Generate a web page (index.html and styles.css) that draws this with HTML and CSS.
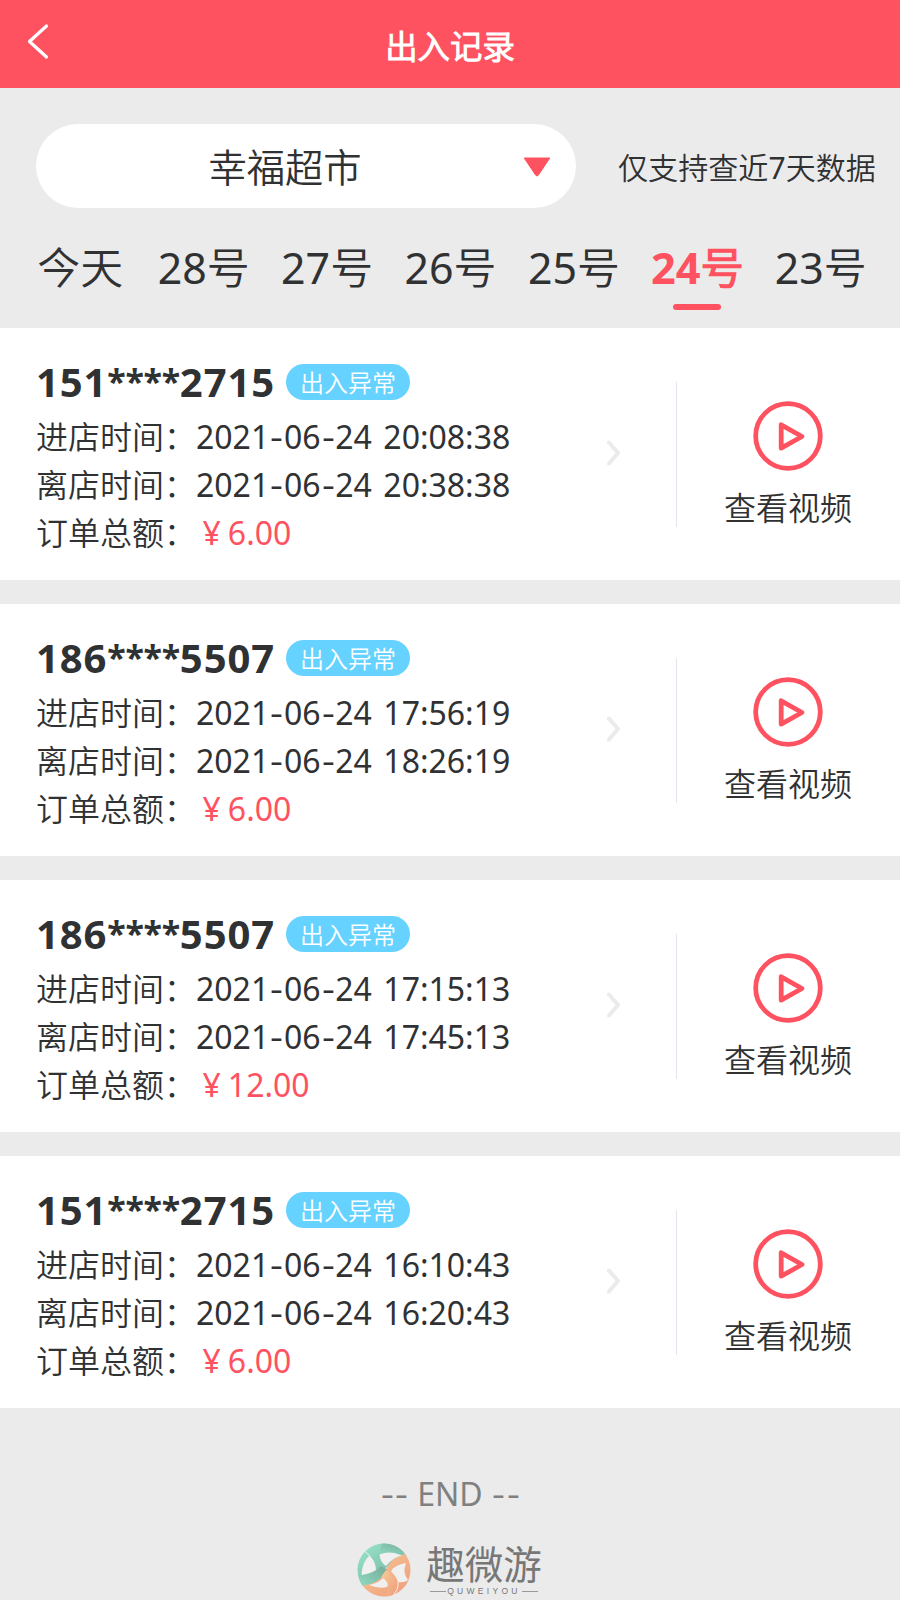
FILE: index.html
```html
<!DOCTYPE html>
<html lang="zh-CN">
<head>
<meta charset="utf-8">
<title>出入记录</title>
<link rel="stylesheet" href="styles.css">
</head>
<body>
<svg class="defs" width="0" height="0">
  <symbol id="chevron" viewBox="0 0 14 26"><path d="M2 2.5 11 13 2 23.5" fill="none" stroke="#ebebeb" stroke-width="4" stroke-linecap="round" stroke-linejoin="round"/></symbol>
  <symbol id="play" viewBox="0 0 70 70"><circle cx="35" cy="35" r="32.3" fill="none" stroke="#ff5260" stroke-width="4.8"/><path d="M28.2 23.8V47.2L49 35.5Z" fill="none" stroke="#ff5260" stroke-width="4.8" stroke-linejoin="round"/></symbol>
</svg>
<header class="topbar">
  <svg class="back" width="24" height="38" viewBox="0 0 24 38"><path d="M20.5 3 3.5 18.5 20.5 34" fill="none" stroke="#fff" stroke-width="3.2" stroke-linecap="round" stroke-linejoin="round"/></svg>
  <h1 class="title">出入记录</h1>
</header>
<section class="filter">
  <div class="select"><span class="shop">幸福超市</span><svg class="arrow" width="28" height="20" viewBox="0 0 28 20"><path d="M1.2 1H26.8L15.3 18.2Q14 19.8 12.7 18.2Z" fill="#ff5260" stroke="#ff5260" stroke-linejoin="round"/></svg></div>
  <span class="note">仅支持查近7天数据</span>
</section>
<nav class="tabs">
  <a class="tab">今天</a><a class="tab">28号</a><a class="tab">27号</a><a class="tab">26号</a><a class="tab">25号</a><a class="tab active">24号</a><a class="tab">23号</a>
</nav>
<main class="list">
  <article class="card">
    <div class="info">
      <div class="head"><b class="phone">151<span class="mask">****</span>2715</b><span class="badge">出入异常</span></div>
      <p class="row">进店时间：2021<i class="dash">-</i>06<i class="dash">-</i>24 20:08:38</p>
      <p class="row">离店时间：2021<i class="dash">-</i>06<i class="dash">-</i>24 20:38:38</p>
      <p class="row">订单总额：<span class="money"><i class="yen">¥</i>6.00</span></p>
    </div>
    <svg class="chevron" width="14" height="26"><use href="#chevron"/></svg>
    <div class="video"><svg width="70" height="70"><use href="#play"/></svg><span class="label">查看视频</span></div>
  </article>
  <article class="card">
    <div class="info">
      <div class="head"><b class="phone">186<span class="mask">****</span>5507</b><span class="badge">出入异常</span></div>
      <p class="row">进店时间：2021<i class="dash">-</i>06<i class="dash">-</i>24 17:56:19</p>
      <p class="row">离店时间：2021<i class="dash">-</i>06<i class="dash">-</i>24 18:26:19</p>
      <p class="row">订单总额：<span class="money"><i class="yen">¥</i>6.00</span></p>
    </div>
    <svg class="chevron" width="14" height="26"><use href="#chevron"/></svg>
    <div class="video"><svg width="70" height="70"><use href="#play"/></svg><span class="label">查看视频</span></div>
  </article>
  <article class="card">
    <div class="info">
      <div class="head"><b class="phone">186<span class="mask">****</span>5507</b><span class="badge">出入异常</span></div>
      <p class="row">进店时间：2021<i class="dash">-</i>06<i class="dash">-</i>24 17:15:13</p>
      <p class="row">离店时间：2021<i class="dash">-</i>06<i class="dash">-</i>24 17:45:13</p>
      <p class="row">订单总额：<span class="money"><i class="yen">¥</i>12.00</span></p>
    </div>
    <svg class="chevron" width="14" height="26"><use href="#chevron"/></svg>
    <div class="video"><svg width="70" height="70"><use href="#play"/></svg><span class="label">查看视频</span></div>
  </article>
  <article class="card">
    <div class="info">
      <div class="head"><b class="phone">151<span class="mask">****</span>2715</b><span class="badge">出入异常</span></div>
      <p class="row">进店时间：2021<i class="dash">-</i>06<i class="dash">-</i>24 16:10:43</p>
      <p class="row">离店时间：2021<i class="dash">-</i>06<i class="dash">-</i>24 16:20:43</p>
      <p class="row">订单总额：<span class="money"><i class="yen">¥</i>6.00</span></p>
    </div>
    <svg class="chevron" width="14" height="26"><use href="#chevron"/></svg>
    <div class="video"><svg width="70" height="70"><use href="#play"/></svg><span class="label">查看视频</span></div>
  </article>
</main>
<footer class="footer">
  <p class="end"><i class="dash">-</i><i class="dash">-</i> END <i class="dash">-</i><i class="dash">-</i></p>
  <div class="brand">
    <svg class="logo" width="54" height="54" viewBox="0 0 54 54">
      <defs>
        <linearGradient id="g1" x1="0" y1="0" x2="1" y2="1"><stop offset="0" stop-color="#98e8cc"/><stop offset="1" stop-color="#76a898"/></linearGradient>
        <linearGradient id="g3" x1="0" y1="1" x2="1" y2="0"><stop offset="0" stop-color="#8fdcc0"/><stop offset="1" stop-color="#76a898"/></linearGradient>
        <linearGradient id="g2" x1="0" y1="0" x2="1" y2="1"><stop offset="0" stop-color="#f6cd9b"/><stop offset="1" stop-color="#f09a78"/></linearGradient>
        <clipPath id="disc"><circle cx="27" cy="27" r="26.5"/></clipPath>
      </defs>
      <g clip-path="url(#disc)">
        <path d="M0 0H54V13Q38 13 29 25Q22 39 0 42Z" fill="url(#g1)"/>
        <path d="M0 42Q22 39 29 26Q37 11 54 10V54H0Z" fill="url(#g2)"/>
        <path d="M25 0H54L46 12Q35 6 22 11Z" fill="url(#g3)"/>
        <path d="M2 32Q17 32 24 23L30 27Q24 40 4 43Z" fill="url(#g3)"/>
        <path d="M29 27Q39 34 41 44L35 54H28Q34 42 24 34Z" fill="url(#g2)"/>
        <path d="M12.5 12.5Q19 19 19 27Q13 31 4.5 32Q5 19 12.5 12.5Z" fill="#f0f0f0"/>
        <path d="M22.5 11.5Q33 7 45 12.5Q35 15 29 23Q23 19 22.5 11.5Z" fill="#f0f0f0"/>
        <path d="M34 28.5Q37 22 49 20Q45 30 51 37Q48 40 41 39Q39 33 34 28.5Z" fill="#f0f0f0"/>
        <path d="M12 42Q22 40 26 35Q33 41 30 44Q22 46 12 42Z" fill="#f0f0f0"/>
        <path d="M8 8.5 13 13M35 53Q42 47 41 39" fill="none" stroke="#f2f0ec" stroke-width="1"/>
      </g>
    </svg>
    <div class="words"><span class="name">趣微游</span><span class="latin">QUWEIYOU</span></div>
  </div>
</footer>
</body>
</html>
```
FILE: styles.css
```css
* { box-sizing: border-box; }
body { margin: 0; height: 1600px; overflow: hidden; background: #ebebeb; color: #303133; font-family: "Noto Sans", "Noto Sans CJK SC DemiLight", "Noto Sans CJK SC Light", "Noto Sans CJK SC", sans-serif; font-size: 32px; }
h1, p { margin: 0; font-weight: 400; }
i { font-style: normal; display: inline-block; }
svg { display: block; flex: none; }
.defs { position: absolute; }
.topbar { height: 88px; background: #ff5260; color: #fff; display: grid; grid-template-columns: 84px 1fr 84px; }
.back { margin: 22.5px 0 0 26px; }
.title { text-align: center; font-size: 32.4px; font-weight: 700; line-height: 88px; padding-top: 2px; }
.filter { display: flex; align-items: center; height: 120px; padding: 36px 0 0 36px; }
.select { width: 540px; height: 84px; border-radius: 42px; background: #fff; display: flex; align-items: center; padding-right: 25px; }
.shop { flex: 1; font-size: 38.3px; line-height: 84px; text-align: center; padding: 1px 0 0 11px; }
.arrow { margin-top: 2px; }
.note { margin-left: 42px; font-size: 30.1px; white-space: nowrap; line-height: 80px; padding-top: 4px; }
.tabs { height: 120px; padding: 0 18px; display: flex; }
.tab { flex: 1; display: flex; flex-direction: column; align-items: center; font-size: 42.9px; line-height: 60px; padding: 30px 0 0 1px; white-space: nowrap; }
.tab.active { color: #ff5260; font-weight: 700; font-size: 43.3px; }
.tab.active::after { content: ""; width: 48px; height: 6px; border-radius: 3px; background: #ff5260; margin-top: 6px; }
.list { display: flex; flex-direction: column; gap: 24px; }
.card { height: 252px; background: #fff; display: flex; }
.info { width: 607px; padding: 29px 0 0 36px; }
.head { display: flex; height: 56px; align-items: flex-start; }
.phone { width: 250px; font-size: 40px; line-height: 50px; letter-spacing: 0.9px; white-space: nowrap; }
.mask { font-size: 34px; line-height: 0; vertical-align: 3px; letter-spacing: -0.3px; }
.badge { width: 124px; height: 36px; margin-top: 7px; border-radius: 18px; background: #66d2ff; color: #fff; font-size: 24px; line-height: 37px; text-align: center; }
.row { height: 48px; line-height: 48px; white-space: nowrap; word-spacing: 3.2px; }
.dash { padding: 0 2.2px; transform: scaleX(1.25); }
.money { color: #ff5260; }
.yen { padding: 0 7px 0 6.5px; }
.chevron { margin-top: 112px; }
.video { width: 223px; height: 145px; margin: 54px 0 0 55px; border-left: 1px solid #e4e4ee; display: flex; flex-direction: column; align-items: center; padding-top: 18.5px; }
.label { line-height: 48px; margin-top: 13.5px; }
.footer { padding-top: 62px; display: flex; flex-direction: column; align-items: center; }
.end { color: #808080; line-height: 48px; }
.brand { display: flex; margin-top: 25px; gap: 14px; }
.words { width: 118px; display: flex; flex-direction: column; align-items: center; color: #777; }
.name { font-family: "Liberation Sans", "Noto Sans CJK SC", sans-serif; font-size: 38.5px; line-height: 46px; height: 43px; }
.latin { width: 108px; display: flex; align-items: center; gap: 1px; font-family: "Liberation Sans", sans-serif; font-size: 8.5px; line-height: 8px; letter-spacing: 3.3px; margin-top: 1px; }
.latin::before, .latin::after { content: ""; flex: 1; height: 1px; background: #999; }
```
